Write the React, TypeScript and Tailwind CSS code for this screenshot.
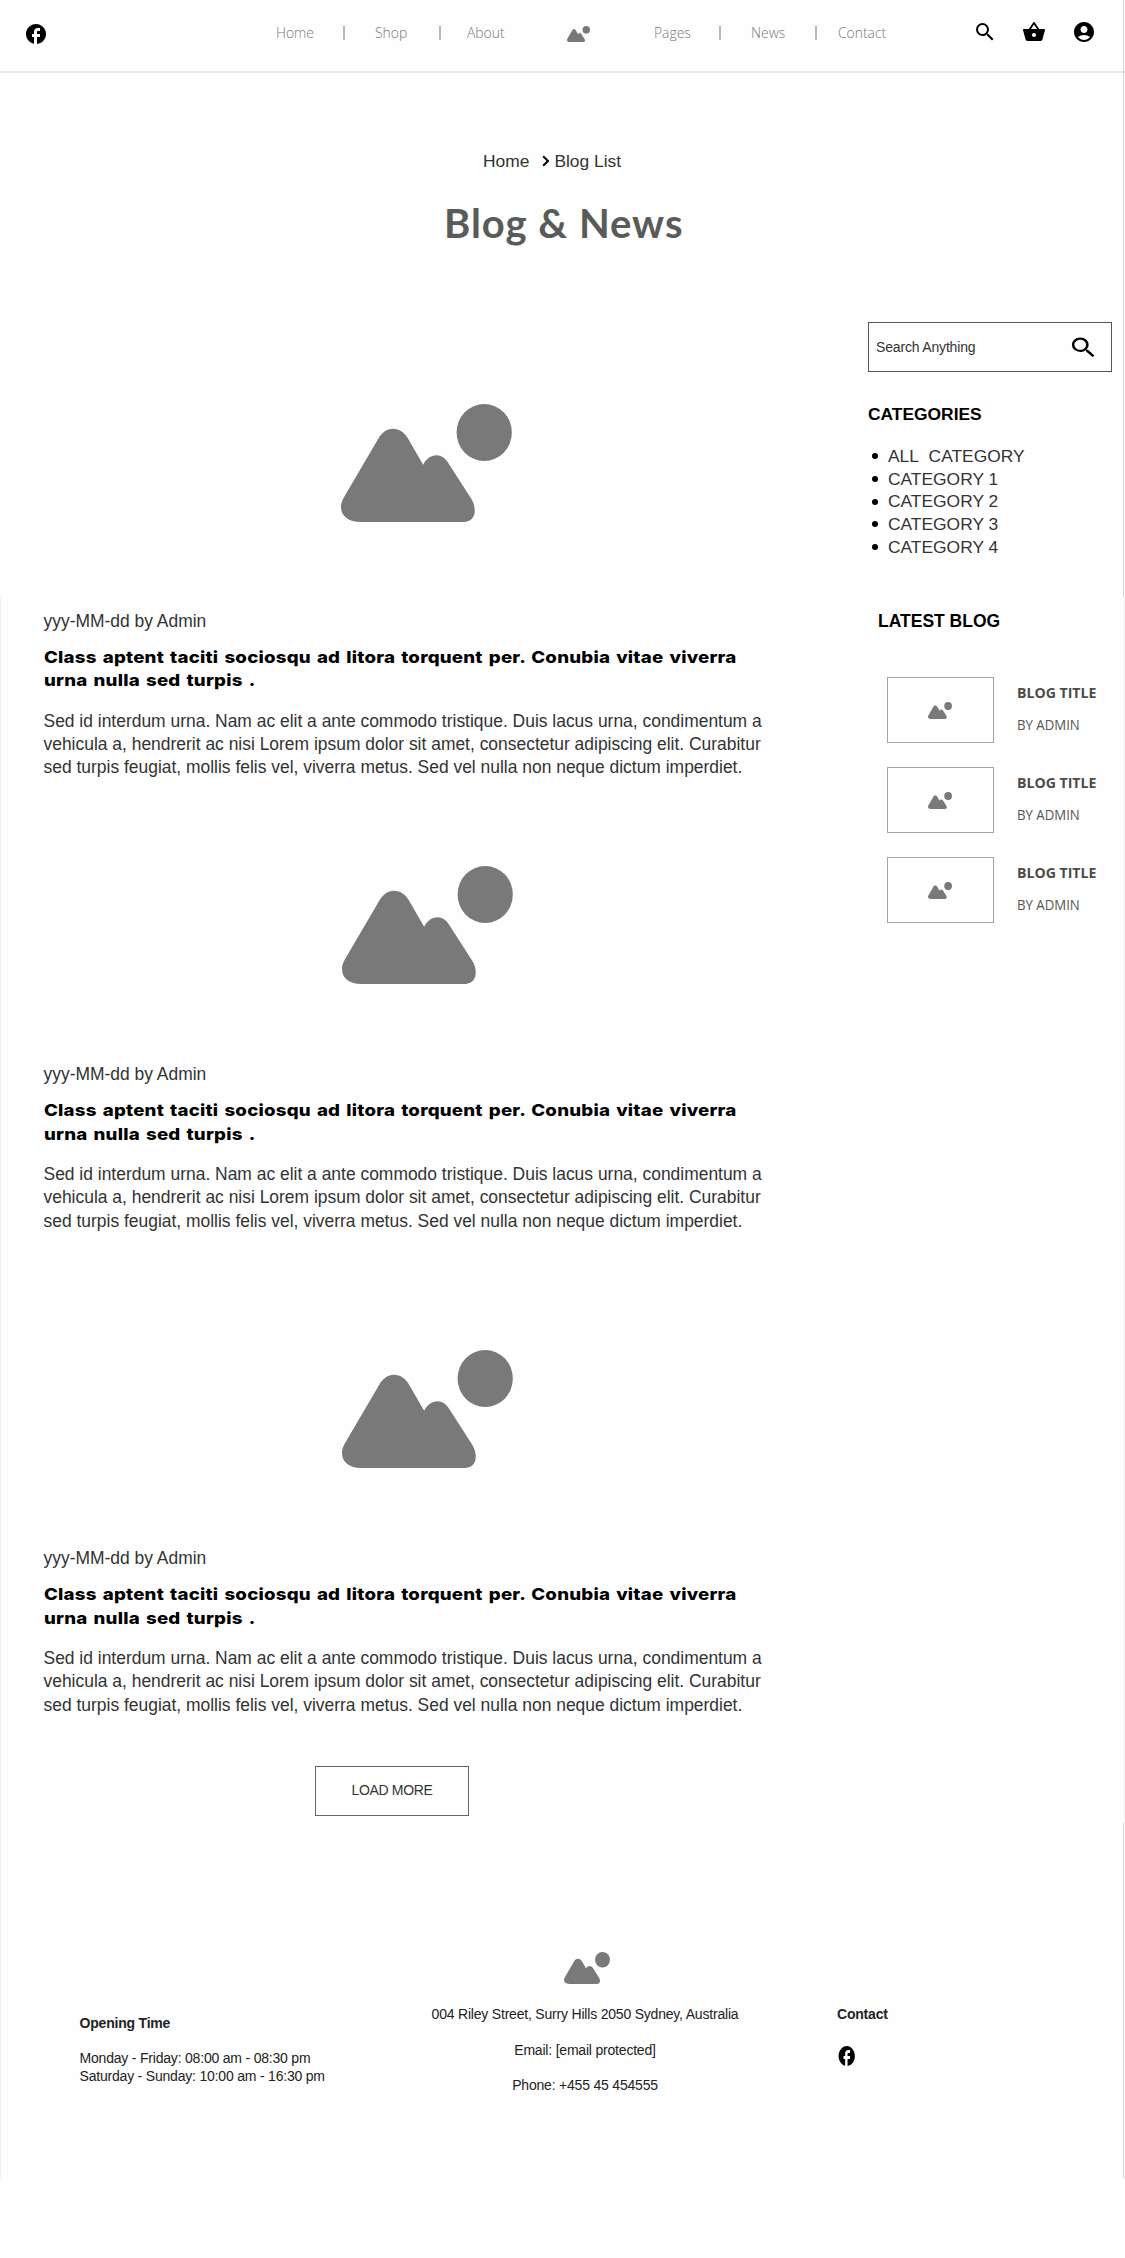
import type { ReactNode } from 'react';
import { MdAccountCircle, MdFacebook, MdSearch, MdShoppingBasket } from 'react-icons/md';

function Mountains({ className }: { className: string }) {
  return (
    <svg viewBox="0 0 514 354" preserveAspectRatio="none" className={`block fill-[#797979] ${className}`}>
      <path d="M60 354C20 354 0 335 0 308C0 298 3 290 8 281L112 104C122 86 138 74 156 74C176 74 191 86 200 101L247 182C256 165 270 154 287 154C302 154 313 163 321 175L392 285C399 297 402 308 402 320C402 342 388 354 365 354Z" />
      <ellipse cx="430.5" cy="85.5" rx="83" ry="85.5" />
    </svg>
  );
}

function NavItem({ className, children }: { className: string; children: ReactNode }) {
  return (
    <a className={`shrink-0 ${className}`}>
      <span className="inline-block origin-left scale-x-[0.925] font-['Open_Sans'] text-[15px] leading-5 font-light text-[#777]">
        {children}
      </span>
    </a>
  );
}

function Divider({ className }: { className: string }) {
  return (
    <span className={`shrink-0 ${className}`}>
      <span className="block h-[14px] w-[2px] bg-[#b8b8b8]" />
    </span>
  );
}

function Header() {
  return (
    <header className="flex h-[73px] items-start border-b-2 border-[#e9e9e9] text-black">
      <div className="w-[276px] shrink-0 pt-[22px] pl-6">
        <MdFacebook size={24} />
      </div>
      <nav className="flex h-[66px] items-center">
        <NavItem className="w-[66.5px]">Home</NavItem>
        <Divider className="w-8" />
        <NavItem className="w-[64px]">Shop</NavItem>
        <Divider className="w-[28.5px]" />
        <NavItem className="w-[100px]">About</NavItem>
        <div className="w-[86.5px]">
          <Mountains className="mt-[2px] h-4 w-[23px]" />
        </div>
        <NavItem className="w-[65.5px]">Pages</NavItem>
        <Divider className="w-8" />
        <NavItem className="w-[64px]">News</NavItem>
        <Divider className="w-[22.5px]" />
        <NavItem className="w-[135px]">Contact</NavItem>
      </nav>
      <div className="flex gap-[25.5px] pt-5">
        <MdSearch size={24} />
        <MdShoppingBasket size={24} />
        <MdAccountCircle size={24} />
      </div>
    </header>
  );
}

function Post({ className, image }: { className: string; image: string }) {
  return (
    <article className={className}>
      <Mountains className={`h-[118px] w-[171px] ${image}`} />
      <p className="text-[17.45px] leading-[23px] text-[#333]">yyy-MM-dd by Admin</p>
      <h2 className="mt-[13px] origin-left scale-x-[1.132] font-['Inter'] text-[16.5px] leading-[23.5px] font-extrabold tracking-[0.18px] [word-spacing:1.6px] whitespace-nowrap text-black">
        Class aptent taciti sociosqu ad litora torquent per. Conubia vitae viverra
        <br />
        urna nulla sed turpis .
      </h2>
      <p className="mt-[17px] text-[17.45px] leading-[23.2px] whitespace-nowrap text-[#333]">
        Sed id interdum urna. Nam ac elit a ante commodo tristique. Duis lacus urna, condimentum a
        <br />
        vehicula a, hendrerit ac nisi Lorem ipsum dolor sit amet, consectetur adipiscing elit. Curabitur
        <br />
        sed turpis feugiat, mollis felis vel, viverra metus. Sed vel nulla non neque dictum imperdiet.
      </p>
    </article>
  );
}

function LatestItem() {
  return (
    <li className="flex">
      <div className="flex h-[66px] w-[107px] items-center justify-center border-[1.5px] border-[#a3a3a3]">
        <Mountains className="h-[17px] w-6" />
      </div>
      <div className="ml-[23.5px] font-['Open_Sans'] text-[15px] whitespace-nowrap">
        <p className="mt-[4.5px] origin-left scale-x-[0.94] leading-5 font-bold text-[#4c4c48]">BLOG TITLE</p>
        <p className="mt-[12.5px] origin-left scale-x-[0.88] leading-5 text-[#555]">BY ADMIN</p>
      </div>
    </li>
  );
}

function Sidebar() {
  return (
    <aside className="mt-[76px] w-[244px] shrink-0">
      <div className="flex h-[50px] items-center justify-between border-[1.5px] border-[#555] pr-[12px] pl-[7px]">
        <span className="text-[14px] tracking-[-0.17px] text-[#333]">Search Anything</span>
        <MdSearch preserveAspectRatio="none" className="h-[27px] w-[31px] text-black" />
      </div>
      <h3 className="mt-[31px] text-[17.4px] leading-[23px] font-bold text-black">CATEGORIES</h3>
      <ul className="mt-[19px] text-[17.4px] leading-[22.7px] text-[#333]">
        {['ALL\u00a0 CATEGORY', 'CATEGORY 1', 'CATEGORY 2', 'CATEGORY 3', 'CATEGORY 4'].map((name) => (
          <li key={name} className="flex items-center">
            <span className="mr-[10px] ml-1 size-[6px] rounded-full bg-black" />
            {name}
          </li>
        ))}
      </ul>
      <h3 className="mt-[51px] ml-[10px] text-[17.5px] leading-[23px] font-bold text-black">LATEST BLOG</h3>
      <ul className="mt-[44.5px] ml-[18.5px] flex flex-col gap-6">
        <LatestItem />
        <LatestItem />
        <LatestItem />
      </ul>
    </aside>
  );
}

function Footer() {
  return (
    <footer className="flex h-[363px] items-start text-[14px] leading-[18px] tracking-[-0.2px] whitespace-nowrap text-[#222]">
      <div className="mt-[199px] ml-[79.5px] w-[351px] shrink-0">
        <h4 className="font-bold">Opening Time</h4>
        <p className="mt-[17px]">
          Monday - Friday: 08:00 am - 08:30 pm
          <br />
          Saturday - Sunday: 10:00 am - 16:30 pm
        </p>
      </div>
      <div className="mt-[137px] flex w-[309px] shrink-0 flex-col items-center">
        <Mountains className="ml-[4px] h-8 w-[46px]" />
        <p className="mt-[20.5px]">004 Riley Street, Surry Hills 2050 Sydney, Australia</p>
        <p className="mt-[18px]">Email: [email protected]</p>
        <p className="mt-[17px]">Phone: +455 45 454555</p>
      </div>
      <div className="mt-[189.5px] ml-[97.5px]">
        <h4 className="font-bold">Contact</h4>
        <MdFacebook preserveAspectRatio="none" className="mt-[21px] h-6 w-[19.5px] text-black" />
      </div>
    </footer>
  );
}

export default function App() {
  return (
    <div className="relative h-[2258px] w-[1125px] overflow-hidden bg-[#fefefe] font-['Liberation_Sans',sans-serif]">
      <Header />
      <div className="mt-[77.5px] flex h-5 items-center pl-[483px] text-[17.4px] leading-5 text-[#333]">
        <span>Home</span>
        <svg viewBox="0 0 8 12" className="mr-[4px] ml-[13px] h-3 w-2 fill-none stroke-black stroke-2">
          <path d="M1.2 1.2L6 6L1.2 10.8" />
        </svg>
        <span>Blog List</span>
      </div>
      <h1 className="mt-[28.5px] h-[47px] pl-[444px] font-['Lato'] text-[40px] leading-[48px] font-bold tracking-[0.95px] text-[#595b59]">
        Blog &amp; News
      </h1>
      <div className="flex">
        <main className="h-[1569px] w-[868px] shrink-0 pt-[158px] pl-[43.5px]">
          <Post className="" image="ml-[297px] mb-[87.5px]" />
          <Post className="mt-[86.5px]" image="ml-[298.5px] mb-[79.5px]" />
          <Post className="mt-[117px]" image="ml-[298.5px] mb-[79.5px]" />
          <button className="mt-[49px] ml-[271.5px] block h-[50px] w-[154px] border-[1.5px] border-[#666] text-[14px] tracking-[-0.35px] text-[#333]">
            LOAD MORE
          </button>
        </main>
        <Sidebar />
      </div>
      <Footer />
      <div className="absolute top-0 left-[1123px] h-[597px] w-px bg-[#d4d4d4]" />
      <div className="absolute top-[597px] left-[1124px] h-[1226px] w-px bg-[#f3f3f3]" />
      <div className="absolute top-[1823px] left-[1123px] h-[355px] w-px bg-[#d4d4d4]" />
      <div className="absolute top-[598px] left-0 h-[1580px] w-px bg-[#eee]" />
    </div>
  );
}
